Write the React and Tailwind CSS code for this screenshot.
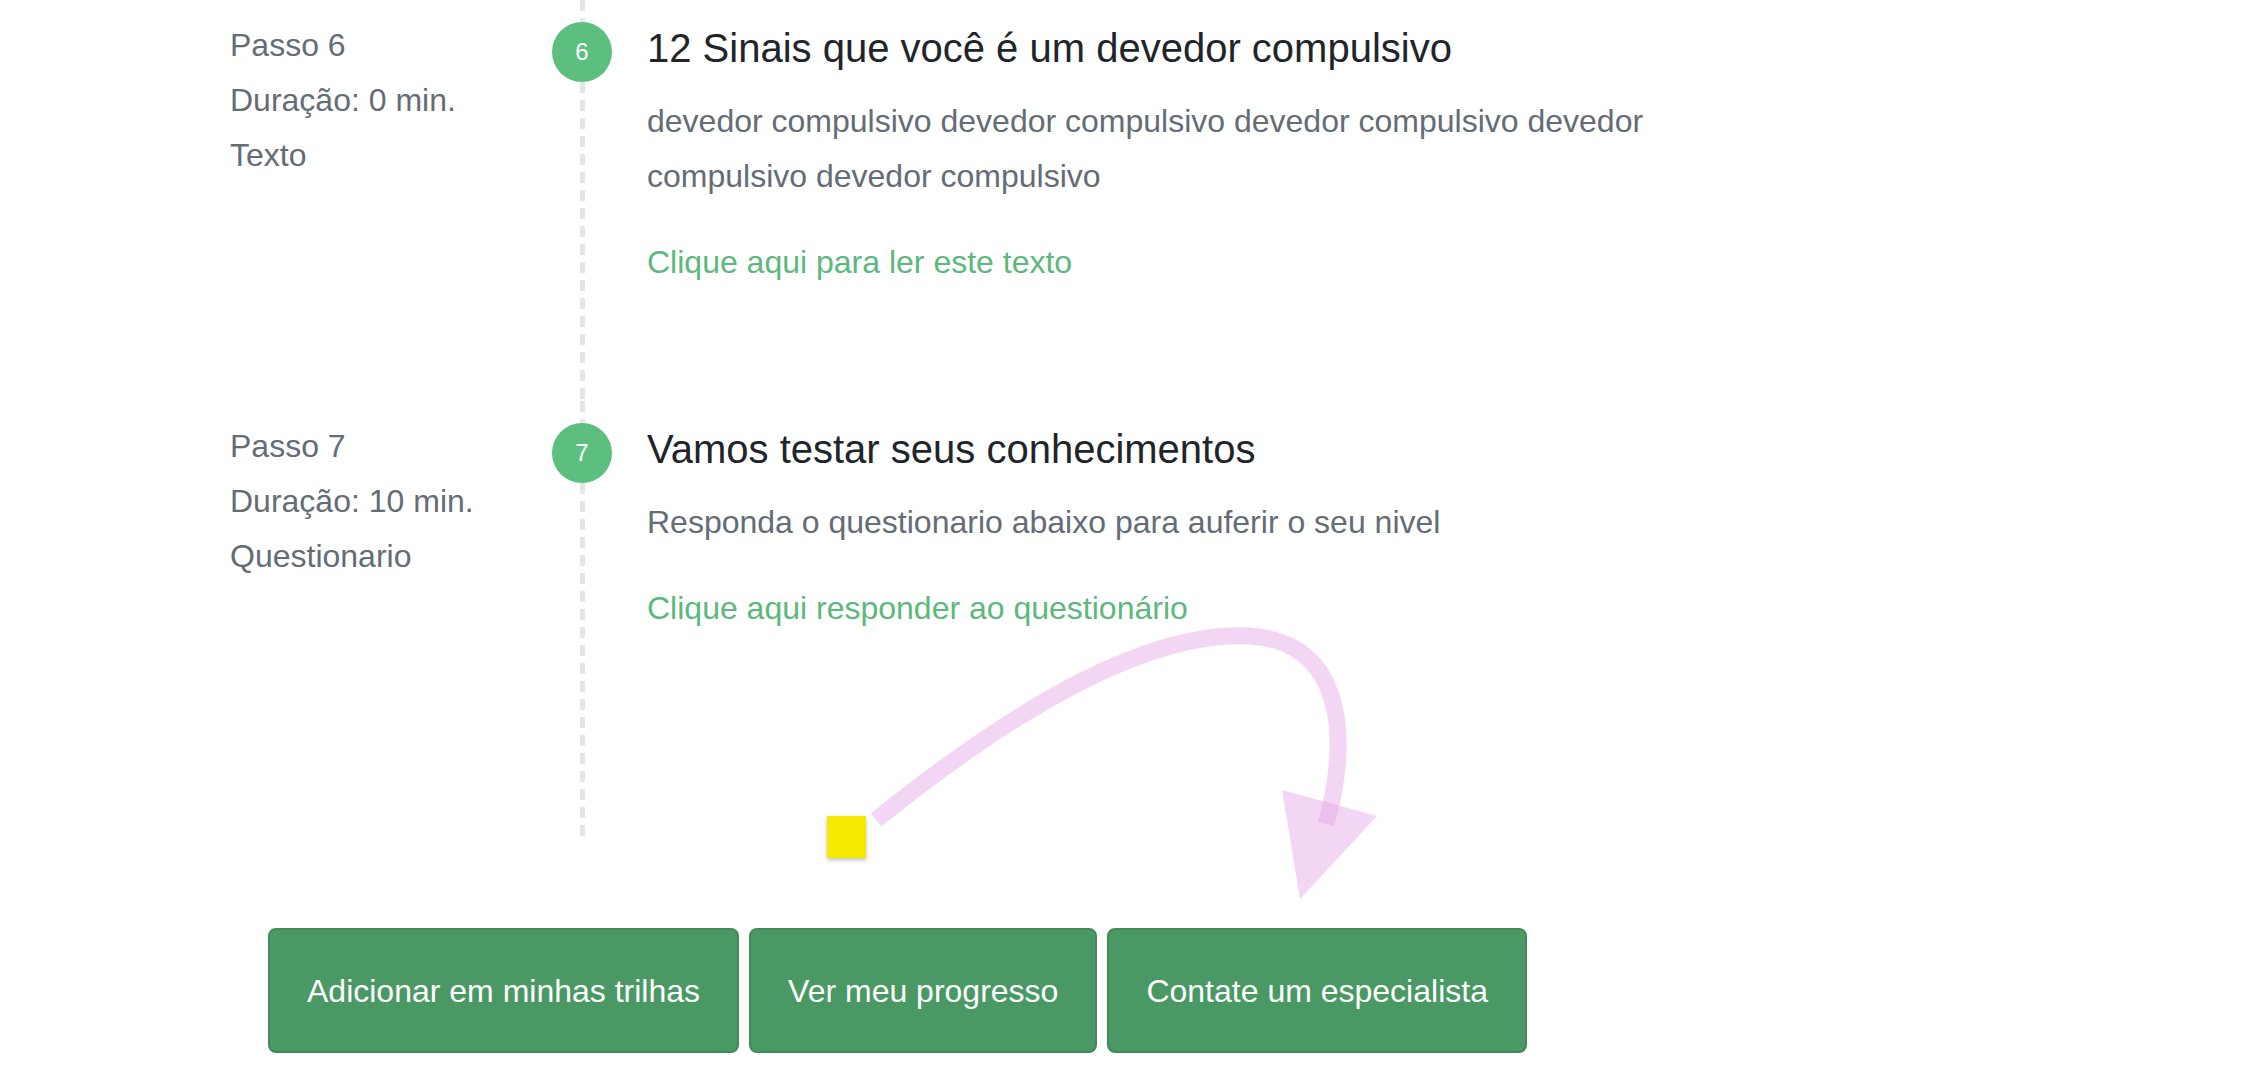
import React from "react";

const steps = [
  {
    n: 6,
    duration: "0 min.",
    kind: "Texto",
    title: "12 Sinais que você é um devedor compulsivo",
    text: "devedor compulsivo devedor compulsivo devedor compulsivo devedor compulsivo devedor compulsivo",
    link: "Clique aqui para ler este texto",
  },
  {
    n: 7,
    duration: "10 min.",
    kind: "Questionario",
    title: "Vamos testar seus conhecimentos",
    text: "Responda o questionario abaixo para auferir o seu nivel",
    link: "Clique aqui responder ao questionário",
    last: true,
  },
];

const dashed =
  "w-[5px] bg-[repeating-linear-gradient(to_bottom,#e3e5ea_0px,#e3e5ea_11px,transparent_11px,transparent_18px)]";

const Step = ({ step }) => (
  <div className="flex">
    {/* left info */}
    <div className="w-[322px] shrink-0 pt-[18px] text-[32px] leading-[55px] text-[#646c75]">
      <p>Passo {step.n}</p>
      <p>Duração: {step.duration}</p>
      <p>{step.kind}</p>
    </div>

    {/* timeline */}
    <div className="w-[60px] shrink-0 flex flex-col items-center">
      <div className={`h-[22px] ${dashed}`} />
      <div className="w-[60px] h-[60px] rounded-full bg-[#5cbf7f] flex items-center justify-center text-white text-[24px]">
        {step.n}
      </div>
      <div className={`flex-1 ${dashed}`} />
    </div>

    {/* content */}
    <div className={`pl-[35px] w-[1130px] pt-[24px] ${step.last ? "pb-[203px]" : "pb-[112px]"}`}>
      <h3 className="text-[40px] leading-[48px] text-[#212529]">{step.title}</h3>
      <p className="mt-[22px] text-[32px] leading-[55px] text-[#646c75]">{step.text}</p>
      <a href="#" className="block mt-[31px] text-[32px] leading-[54px] text-[#5cb87d]">
        {step.link}
      </a>
    </div>
  </div>
);

export default function App() {
  return (
    <div className="relative w-[2258px] h-[1088px] bg-white overflow-hidden font-['Liberation_Sans',Arial,sans-serif]">
      <div className="pl-[230px] flex flex-col">
        {steps.map((s) => (
          <Step key={s.n} step={s} />
        ))}
      </div>

      <div className="flex gap-[10px] pl-[268px] mt-[90px]">
        {["Adicionar em minhas trilhas", "Ver meu progresso", "Contate um especialista"].map((t) => (
          <button
            key={t}
            className="h-[125px] px-[37px] rounded-[8px] bg-[#4a9964] border-2 border-[#428a5a] text-white text-[32px]"
          >
            {t}
          </button>
        ))}
      </div>

      {/* annotation overlay */}
      <svg
        className="absolute inset-0 pointer-events-none"
        width="2258"
        height="1088"
        viewBox="0 0 2258 1088"
      >
        <defs>
          <filter id="sh" x="-20%" y="-20%" width="160%" height="160%">
            <feDropShadow dx="0" dy="2" stdDeviation="2" floodColor="#000" floodOpacity="0.25" />
          </filter>
        </defs>
        <path
          d="M 876 820 C 1000 720, 1140 630, 1250 636 C 1345 642, 1350 740, 1326 824"
          fill="none"
          stroke="#e4a4e4"
          strokeOpacity="0.45"
          strokeWidth="17"
        />
        <polygon points="1282,790 1377,816 1300,899" fill="#e4a4e4" fillOpacity="0.45" />
        <rect x="827" y="816" width="39" height="42" fill="#f5e900" filter="url(#sh)" />
      </svg>
    </div>
  );
}
